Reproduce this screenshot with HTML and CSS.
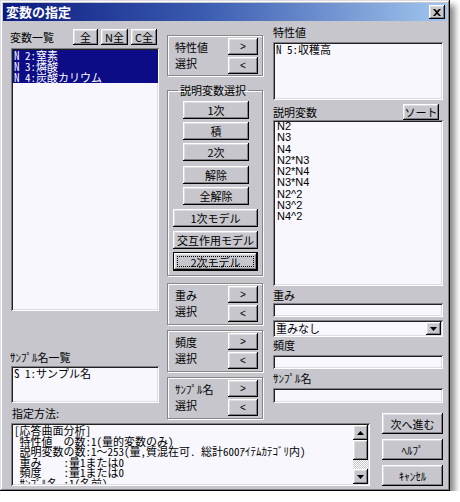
FILE: index.html
```html
<!DOCTYPE html>
<html lang="ja">
<head>
<meta charset="utf-8">
<title>変数の指定</title>
<link rel="stylesheet" href="styles.css">
</head>
<body>
<div class="win">
  <div class="titlebar">
    <span class="title">変数の指定</span>
    <div class="btn close">
      <svg width="8" height="7" viewBox="0 0 8 7"><path d="M0 0h2l2 2 2-2h2L5 3.5 8 7H6L4 5 2 7H0l3-3.5z" fill="#000"/></svg>
    </div>
  </div>
  <div class="content">
    <div class="col-left">
      <div class="hdr">
        <span class="lbl hdr-lbl">変数一覧</span>
        <div class="minibtns">
          <div class="btn mb-all">全</div>
          <div class="btn mb-n">N全</div>
          <div class="btn mb-c">C全</div>
        </div>
      </div>
      <div class="sunk list varlist">
        <div class="item sel">N 2:窒素
N 3:燐酸
N 4:炭酸カリウム</div>
      </div>
      <div class="lbl sample-lbl">ｻﾝﾌﾟﾙ名一覧</div>
      <div class="sunk list samplelist">
        <div class="item">S 1:サンプル名</div>
      </div>
      <div class="lbl method-lbl">指定方法:</div>
    </div>

    <div class="col-mid">
      <div class="grp g1">
        <div class="glabels"><span>特性値</span><span>選択</span></div>
        <div class="gbtns"><div class="btn">&gt;</div><div class="btn">&lt;</div></div>
      </div>
      <fieldset class="grp2">
        <legend>説明変数選択</legend>
        <div class="btn sbtn b1">1次</div>
        <div class="btn sbtn b2">積</div>
        <div class="btn sbtn b3">2次</div>
        <div class="btn sbtn b4">解除</div>
        <div class="btn sbtn b5">全解除</div>
        <div class="btn mbtn b6">1次モデル</div>
        <div class="btn mbtn b7">交互作用モデル</div>
        <div class="btn mbtn b8 default"><span class="focus">2次モデル</span></div>
      </fieldset>
      <div class="grp g3">
        <div class="glabels"><span>重み</span><span>選択</span></div>
        <div class="gbtns"><div class="btn">&gt;</div><div class="btn">&lt;</div></div>
      </div>
      <div class="grp g4">
        <div class="glabels"><span>頻度</span><span>選択</span></div>
        <div class="gbtns"><div class="btn">&gt;</div><div class="btn">&lt;</div></div>
      </div>
      <div class="grp g5">
        <div class="glabels"><span>ｻﾝﾌﾟﾙ名</span><span>選択</span></div>
        <div class="gbtns"><div class="btn">&gt;</div><div class="btn">&lt;</div></div>
      </div>
    </div>

    <div class="col-right">
      <div class="lbl r-lbl1">特性値</div>
      <div class="sunk list tlist">
        <div class="item">N 5:収穫高</div>
      </div>
      <div class="hdr2">
        <span class="lbl">説明変数</span>
        <div class="btn sort">ソート</div>
      </div>
      <div class="sunk list xlist">
        <div class="xitem">N2</div>
        <div class="xitem">N3</div>
        <div class="xitem">N4</div>
        <div class="xitem">N2*N3</div>
        <div class="xitem">N2*N4</div>
        <div class="xitem">N3*N4</div>
        <div class="xitem">N2^2</div>
        <div class="xitem">N3^2</div>
        <div class="xitem">N4^2</div>
      </div>
      <div class="lbl r-lbl2">重み</div>
      <div class="sunk edit e1"></div>
      <div class="sunk combo">
        <span class="combo-text">重みなし</span>
        <div class="btn dd">
          <svg width="7" height="4" viewBox="0 0 7 4"><path d="M0 0h7L3.5 4z" fill="#000"/></svg>
        </div>
      </div>
      <div class="lbl r-lbl3">頻度</div>
      <div class="sunk edit e2"></div>
      <div class="lbl r-lbl4">ｻﾝﾌﾟﾙ名</div>
      <div class="sunk edit e3"></div>
    </div>

    <div class="sunk memo">
      <div class="memo-text">[応答曲面分析]
 特性値　の数:1(量的変数のみ)
 説明変数の数:1～253(量,質混在可. 総計600ｱｲﾃﾑｶﾃｺﾞﾘ内)
 重み　　:量1または0
 頻度　　:量1または0
 ｻﾝﾌﾟﾙ名 :1(名前)</div>
      <div class="vscroll">
        <div class="btn sarrow">
          <svg width="7" height="4" viewBox="0 0 7 4"><path d="M3.5 0L7 4H0z" fill="#000"/></svg>
        </div>
        <div class="btn thumb"></div>
        <div class="track"></div>
        <div class="btn sarrow">
          <svg width="7" height="4" viewBox="0 0 7 4"><path d="M0 0h7L3.5 4z" fill="#000"/></svg>
        </div>
      </div>
    </div>

    <div class="actions">
      <div class="btn act">次へ進む</div>
      <div class="btn act">ﾍﾙﾌﾟ</div>
      <div class="btn act">ｷｬﾝｾﾙ</div>
    </div>
  </div>
</div>
</body>
</html>
```

FILE: styles.css
```css
* { box-sizing: border-box; }
html, body { margin: 0; padding: 0; background: #ffffff; }
body {
  font-family: "Noto Sans CJK JP", "Liberation Sans", sans-serif;
  font-size: 11px;
  color: #000;
}

.win {
  width: 450px;
  height: 491px;
  padding: 3px;
  background: #c6c6cc;
  box-shadow:
    inset -1px -1px 0 #000,
    inset 1px 1px 0 #dcdce2,
    inset -2px -2px 0 #808086,
    inset 2px 2px 0 #fff,
    5px 5px 6px rgba(0, 0, 0, 0.45);
}

.titlebar {
  height: 18px;
  display: flex;
  align-items: center;
  justify-content: space-between;
  padding: 0 2px 0 3px;
  background: linear-gradient(90deg, #0c1a80 0%, #3a5cb0 45%, #a2c6ee 100%);
}
.title {
  color: #fff;
  font-weight: bold;
  font-size: 13px;
  line-height: 18px;
}

.btn {
  display: flex;
  align-items: center;
  justify-content: center;
  background: #c6c6cc;
  line-height: 12px;
  white-space: nowrap;
  box-shadow:
    inset -1px -1px 0 #000,
    inset 1px 1px 0 #fff,
    inset -2px -2px 0 #808086,
    inset 2px 2px 0 #dcdce2;
}
.close { width: 16px; height: 14px; }

.sunk {
  background: #f7f7fd;
  box-shadow:
    inset 1px 1px 0 #808086,
    inset -1px -1px 0 #fff,
    inset 2px 2px 0 #202020,
    inset -2px -2px 0 #dcdce2;
  padding: 2px;
}

.lbl { line-height: 12px; height: 12px; white-space: nowrap; }

.content {
  display: grid;
  grid-template-columns: 148px 8px 96px 10px 97px 12px 61px;
  grid-template-rows: 397px 63px;
  margin: 5px 0 0 8px;
}

/* left column */
.col-left { grid-column: 1; grid-row: 1; display: flex; flex-direction: column; }
.hdr { height: 22px; display: flex; align-items: flex-start; }
.hdr-lbl { margin-top: 5px; margin-left: -1px; }
.minibtns { margin-left: auto; margin-top: 3px; margin-right: 2px; display: flex; gap: 3px; }
.minibtns .btn { height: 16px; }
.mb-all { width: 25px; }
.mb-n { width: 27px; }
.mb-c { width: 26px; }

.list { overflow: hidden; }
.varlist { height: 263px; padding: 2px 1px 2px 2px; }
.item {
  font-family: "Noto Sans Mono CJK JP", "Noto Sans CJK JP", monospace;
  line-height: 11px;
  padding-left: 1px;
  white-space: pre;
}
.item.sel { background: #0c0c86; color: #fff; height: 33px; }
.sample-lbl { margin-top: 40px; margin-left: -1px; }
.samplelist { height: 37px; margin-top: 3px; }
.method-lbl { margin-top: 4px; margin-left: 1px; }

/* middle column */
.col-mid { grid-column: 3; grid-row: 1; display: flex; flex-direction: column; }
.grp {
  height: 42px;
  border: 1px solid #85858b;
  box-shadow: inset 1px 1px 0 #fff, 1px 1px 0 #fff;
  display: flex;
  padding: 2px 4px 0 7px;
}
.g1 { margin-top: 9px; height: 41px; }
.g3 { margin-top: 7px; }
.g4 { margin-top: 5px; }
.g5 { margin-top: 5px; }
.glabels { flex: 1; display: flex; flex-direction: column; padding-top: 1px; }
.glabels span { line-height: 16px; height: 16px; white-space: nowrap; }
.gbtns { width: 30px; display: flex; flex-direction: column; gap: 2px; }
.gbtns .btn { height: 17px; font-family: "Liberation Sans", sans-serif; font-size: 10px; }

.grp2 {
  margin: 8px 0 0 0;
  padding: 5px 4px 4px 5px;
  min-width: 0;
  border: 1px solid #85858b;
  box-shadow: inset 1px 1px 0 #fff, 1px 1px 0 #fff;
  display: flex;
  flex-direction: column;
}
.grp2 legend {
  margin-left: 5px;
  padding: 0 2px;
  line-height: 12px;
  height: 12px;
}
.sbtn { height: 18px; margin: 0 9px 0 10px; }
.mbtn { height: 18px; }
.b2, .b3, .b5 { margin-top: 3px; }
.b4 { margin-top: 5px; }
.b6, .b7 { margin-top: 4px; }
.b8 { margin-top: 3px; height: 19px; }
.default { border: 1px solid #000; padding: 3px; }
.focus {
  flex: 1;
  align-self: stretch;
  display: flex;
  align-items: center;
  justify-content: center;
  border: 1px dotted #000;
}

/* right column */
.col-right { grid-column: 5 / 8; grid-row: 1; display: flex; flex-direction: column; }
.tlist { height: 58px; margin-top: 4px; }
.hdr2 { height: 16px; margin-top: 4px; display: flex; align-items: center; }
.hdr2 .lbl { line-height: 16px; height: 16px; }
.sort { margin-left: auto; margin-right: 4px; width: 36px; height: 16px; }
.xlist { height: 166px; padding: 1px 2px 2px 4px; }
.xitem {
  font-family: "Liberation Sans", sans-serif;
  font-size: 11px;
  line-height: 11.3px;
  height: 11.3px;
}
.r-lbl2 { margin-top: 3px; }
.e1 { height: 14px; margin-top: 2px; }
.combo {
  height: 17px;
  margin-top: 3px;
  display: flex;
  align-items: center;
  padding: 2px 2px 2px 3px;
}
.combo-text { flex: 1; line-height: 13px; }
.dd { width: 15px; height: 13px; }
.r-lbl3 { margin-top: 2px; }
.e2 { height: 14px; margin-top: 4px; }
.r-lbl4 { margin-top: 3px; }
.e3 { height: 15px; margin-top: 4px; }

/* bottom */
.memo {
  grid-column: 1 / 6;
  grid-row: 2;
  display: flex;
  padding: 2px;
  overflow: hidden;
}
.memo-text {
  flex: 1;
  overflow: hidden;
  font-family: "Noto Sans Mono CJK JP", "Noto Sans CJK JP", monospace;
  white-space: pre;
  line-height: 10.6px;
  padding-left: 1px;
}
.vscroll { width: 15px; display: flex; flex-direction: column; }
.sarrow { height: 15px; }
.thumb { height: 20px; }
.track {
  flex: 1;
  background: repeating-conic-gradient(#ffffff 0 25%, #c6c6cc 0 50%) 0 0 / 2px 2px;
}

.actions {
  grid-column: 7;
  grid-row: 1 / 3;
  align-self: end;
  display: flex;
  flex-direction: column;
  gap: 5px;
}
.act { height: 21px; }
```
